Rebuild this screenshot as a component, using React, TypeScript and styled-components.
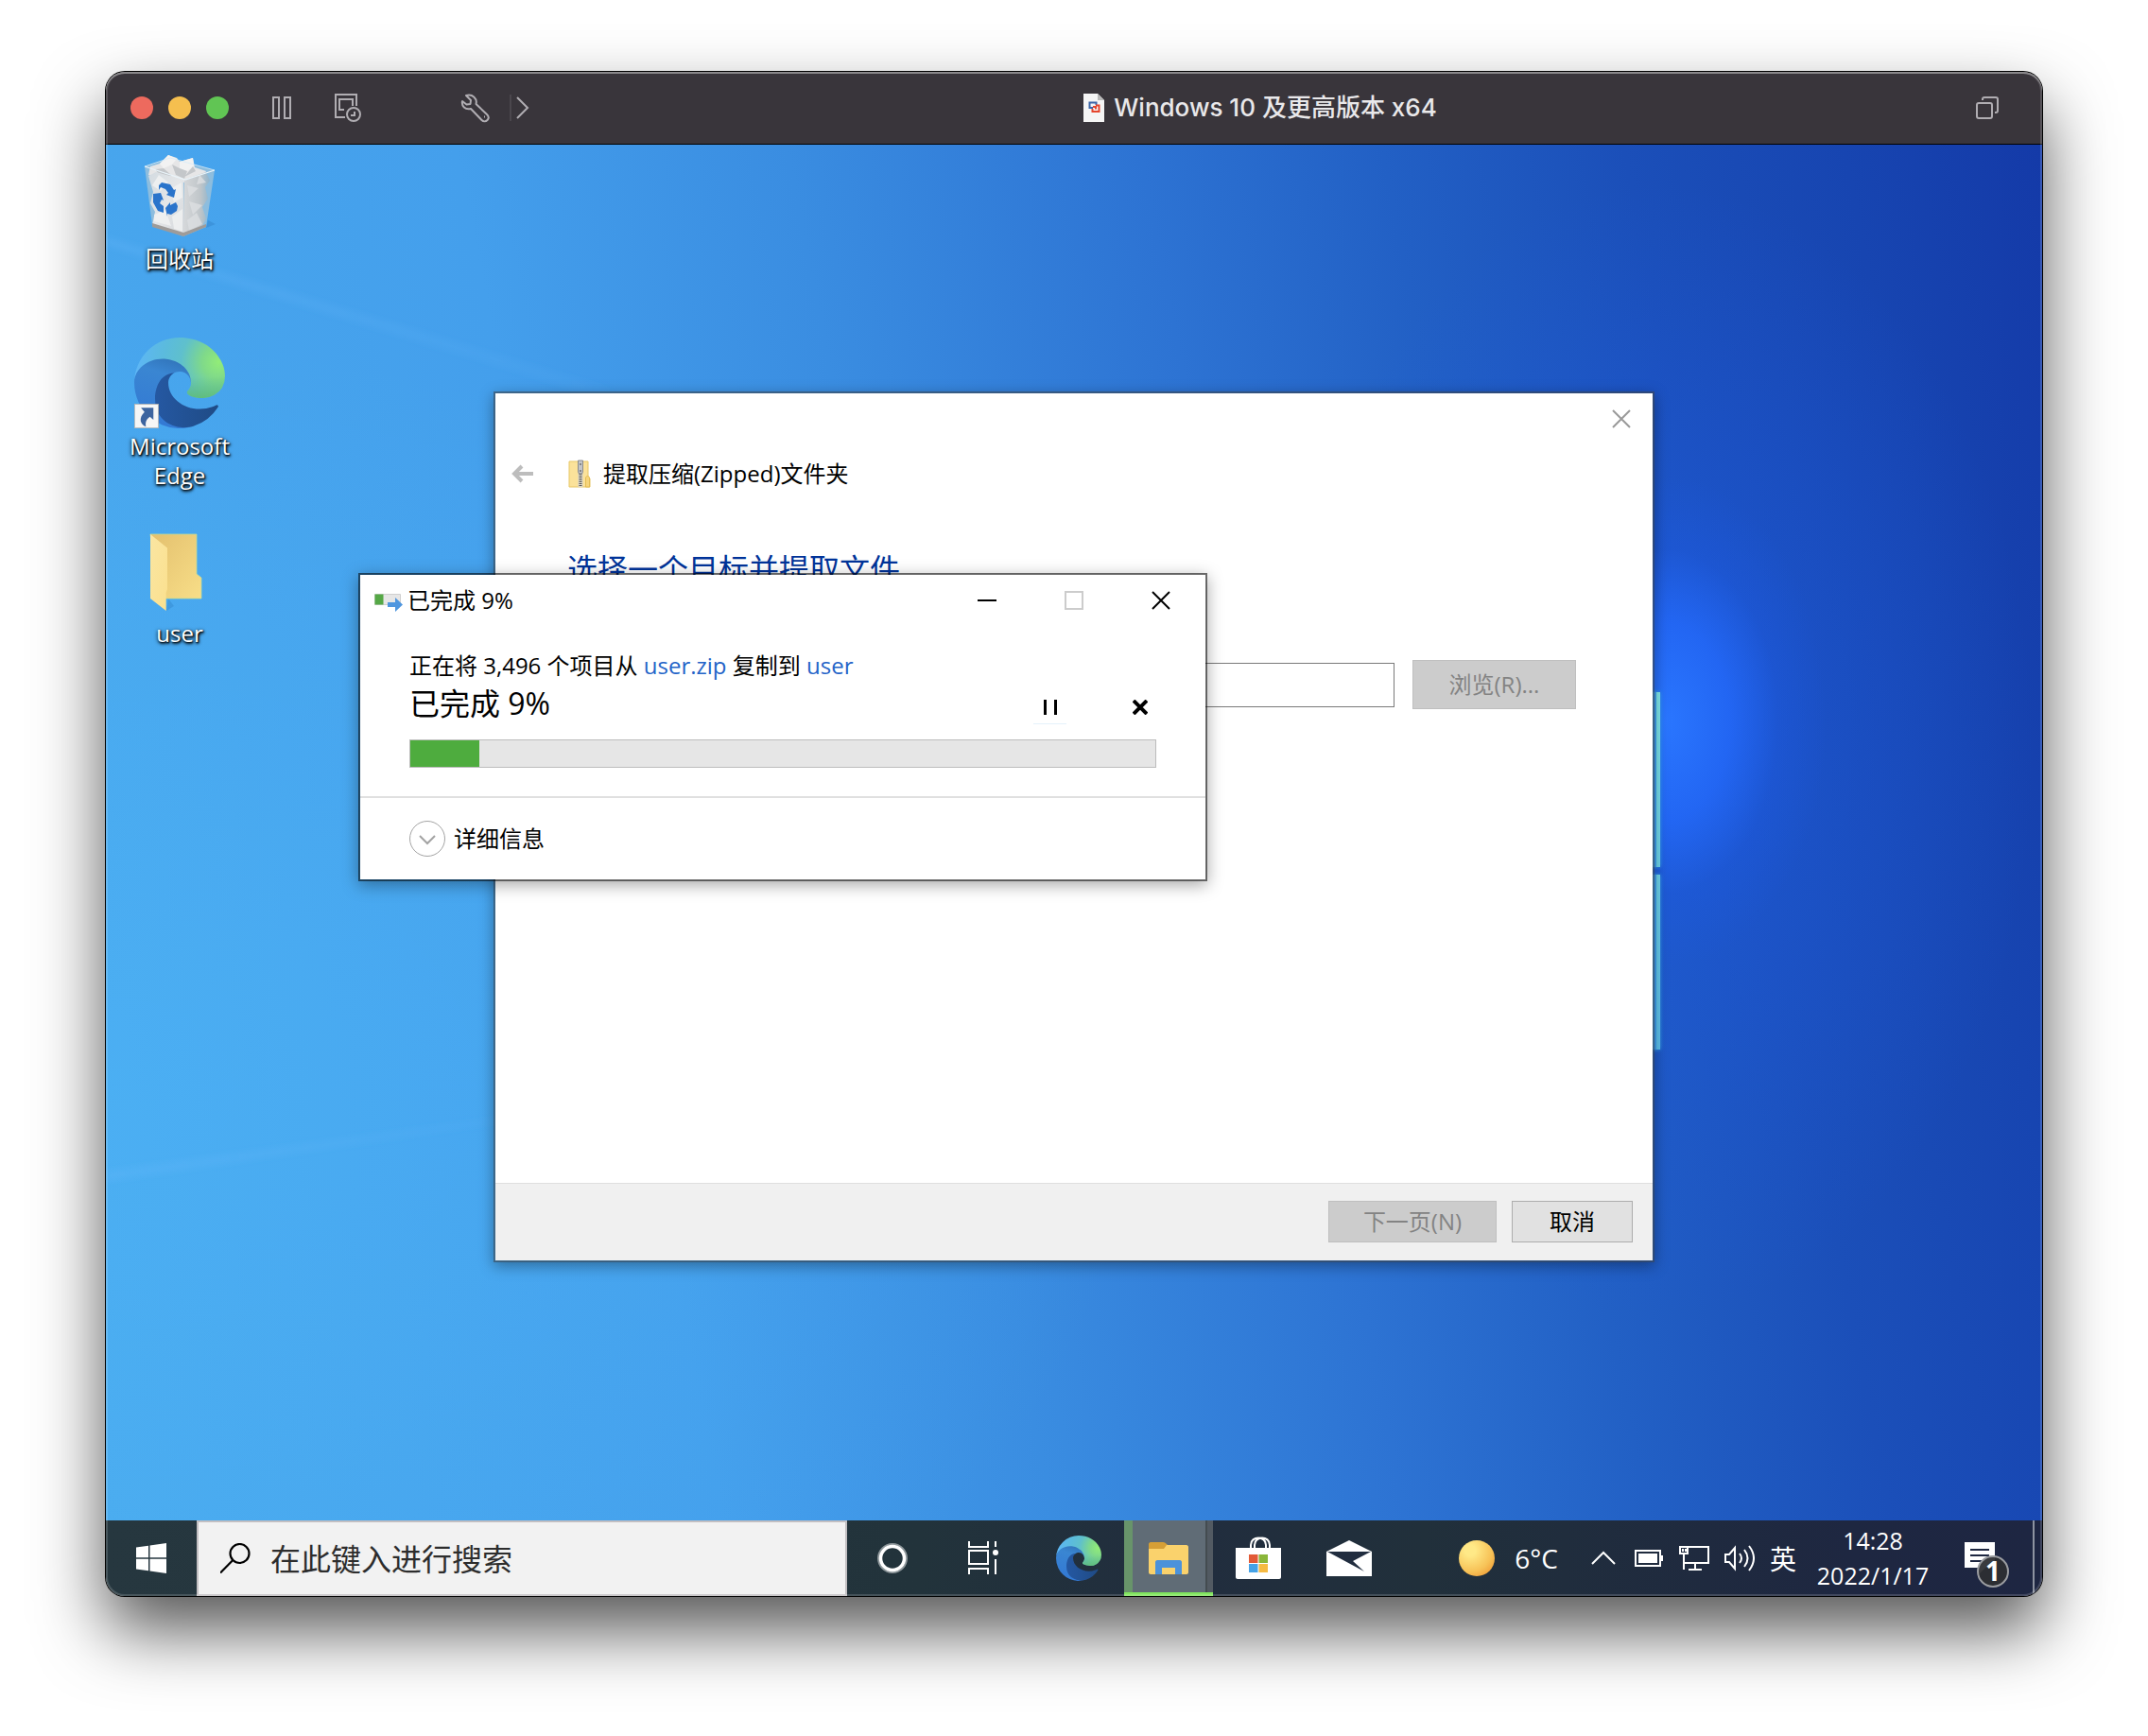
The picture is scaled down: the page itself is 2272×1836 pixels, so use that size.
import React from "react";
import styled, { createGlobalStyle } from "styled-components";

const uiFont = `"Open Sans", "Noto Sans CJK SC", sans-serif`;

const GlobalStyle = createGlobalStyle`
  *, *::before, *::after { box-sizing: border-box; }
  html, body { margin: 0; background: #fff; }
  body { font-family: ${uiFont}; color: #000; }
  button, input { font: inherit; color: inherit; }
  button { margin: 0; padding: 0; border: 0; background: none; }
  svg { display: block; flex: none; }
`;

const Page = styled.div`
  min-height: 100vh;
  display: flex;
  padding: 76px 112px 148px;
  overflow: hidden;
`;

const VmWindow = styled.main`
  position: relative;
  flex: 1;
  min-width: 0;
  display: flex;
  flex-direction: column;
  border-radius: 20px;
  overflow: hidden;
  box-shadow: 0 0 0 1px #000, 0 36px 72px rgba(0, 0, 0, 0.67);
  &::after {
    content: "";
    position: absolute;
    inset: 0;
    border-radius: 20px;
    pointer-events: none;
    box-shadow: inset 0 2px rgba(255, 255, 255, 0.3), inset 0 0 0 2px rgba(255, 255, 255, 0.16);
  }
`;

/* ---------- host title bar ---------- */

const HostBar = styled.header`
  display: flex;
  align-items: center;
  height: 77px;
  flex: none;
  padding: 0 46px 0 26px;
  background: #39353b;
  border-bottom: 1px solid #000;
  color: #b0adb2;
`;

const Lights = styled.div`
  display: flex;
  gap: 16px;
`;

const Light = styled.button<{ $color: string }>`
  width: 24px;
  height: 24px;
  border-radius: 50%;
  background: ${(p) => p.$color};
`;

const HostTools = styled.div<{ $start: number; $gap: number }>`
  display: flex;
  align-items: center;
  gap: ${(p) => p.$gap}px;
  margin-left: ${(p) => p.$start}px;
`;

const HostDivider = styled.span`
  width: 2px;
  height: 28px;
  margin: 0 -14px 0 2px;
  background: #4b474d;
`;

const HostTitle = styled.h1`
  flex: 1;
  display: flex;
  align-items: center;
  justify-content: center;
  gap: 9px;
  margin: 0;
  padding-left: 14px;
  font: 500 26px/32px Inter, "Noto Sans CJK SC", sans-serif;
  color: #e9e8ea;
  white-space: nowrap;
`;

/* ---------- guest desktop ---------- */

const Desktop = styled.section`
  position: relative;
  flex: 1;
  min-height: 1200px;
  overflow: hidden;
  background:
    radial-gradient(ellipse 170px 260px at 1650px 610px, rgba(42, 118, 255, 1), rgba(36, 106, 252, 0.8) 40%, rgba(30, 92, 230, 0.3) 70%, rgba(30, 90, 225, 0) 100%),
    radial-gradient(ellipse 400px 600px at 1640px 640px, rgba(30, 90, 225, 0.6), rgba(30, 90, 225, 0) 100%),
    radial-gradient(ellipse 1100px 800px at 0 1000px, rgba(80, 190, 255, 0.3), rgba(80, 190, 255, 0) 100%),
    linear-gradient(79deg, #4aaaee 0%, #449fec 28%, #3a8de1 43%, #2d73d3 59%, #2260c5 70%, #1b4fb9 81%, #1745b1 91%, #143aa8 100%);
`;

const Wallpaper = styled.svg`
  position: absolute;
  inset: 0;
  width: 100%;
  height: 100%;
`;

const Shortcuts = styled.nav`
  position: relative;
  width: 156px;
  padding-top: 6px;
`;

const Shortcut = styled.button`
  display: flex;
  flex-direction: column;
  align-items: center;
  gap: 3px;
  width: 156px;
  height: 198px;
`;

const ShortcutArt = styled.span`
  display: grid;
  place-items: center;
  height: 96px;
`;

const ShortcutLabel = styled.span`
  width: 120px;
  font-size: 24px;
  line-height: 31px;
  text-align: center;
  color: #fff;
  text-shadow: 1px 1px 2px #000, 0 1px 4px rgba(0, 0, 0, 0.8), 1px 2px 3px rgba(0, 0, 0, 0.6);
`;

/* ---------- extract wizard ---------- */

const Wizard = styled.section`
  position: absolute;
  left: 410px;
  top: 261px;
  width: 1228px;
  height: 921px;
  display: flex;
  flex-direction: column;
  border: 2px solid rgba(60, 70, 80, 0.6);
  background: #fff;
  background-clip: padding-box;
  box-shadow: 0 4px 14px rgba(0, 0, 0, 0.35);
  font-size: 24px;
  line-height: 32px;
`;

const WizardTop = styled.div`
  display: flex;
  justify-content: flex-end;
`;

const WizardClose = styled.button`
  display: grid;
  place-items: center;
  width: 66px;
  height: 54px;
  color: #999;
`;

const WizardHeader = styled.header`
  display: flex;
  align-items: center;
  height: 62px;
  padding-left: 17px;
`;

const WizardName = styled.h2`
  display: flex;
  align-items: center;
  gap: 13px;
  margin: 0 0 0 36px;
  font-size: 24px;
  font-weight: 400;
`;

const WizardBody = styled.div`
  flex: 1;
  padding: 50px 81px 0 76px;
`;

const WizardHeading = styled.h3`
  margin: 0 0 76px;
  font-size: 32px;
  line-height: 40px;
  font-weight: 400;
  color: #003399;
`;

const PathRow = styled.div`
  display: flex;
  align-items: center;
  gap: 19px;
`;

const PathInput = styled.input`
  flex: 1;
  min-width: 0;
  height: 47px;
  padding: 0 8px;
  border: 1px solid #7a7a7a;
  border-radius: 0;
  background: #fff;
`;

const PushButton = styled.button<{ $w: number; $h: number }>`
  width: ${(p) => p.$w}px;
  height: ${(p) => p.$h}px;
  border: 1px solid #adadad;
  background: #e1e1e1;
  color: #000;
  &:disabled {
    border-color: #bfbfbf;
    background: #ccc;
    color: #838383;
  }
`;

const WizardFooter = styled.footer`
  display: flex;
  justify-content: flex-end;
  align-items: center;
  gap: 16px;
  height: 82px;
  padding: 0 21px 2px 0;
  border-top: 1px solid #dfdfdf;
  background: #f0f0f0;
`;

/* ---------- copy progress ---------- */

const CopyDialog = styled.section`
  position: absolute;
  left: 267px;
  top: 453px;
  width: 898px;
  border: 2px solid rgba(0, 0, 0, 0.56);
  background: #fff;
  background-clip: padding-box;
  box-shadow: 0 4px 16px rgba(0, 0, 0, 0.35);
  font-size: 24px;
  line-height: 36px;
`;

const CopyTop = styled.header`
  display: flex;
  align-items: center;
  height: 54px;
  padding: 0 1px 0 14px;
`;

const CopyTitle = styled.h2`
  flex: 1;
  display: flex;
  align-items: center;
  gap: 4px;
  margin: 0;
  font-size: 24px;
  font-weight: 400;
`;

const CaptionButton = styled.button`
  display: grid;
  place-items: center;
  width: 92px;
  height: 54px;
`;

const CopyBody = styled.div`
  padding: 24px 52px 30px;
`;

const CopyLine = styled.p`
  margin: 0;
`;

const CopyLink = styled.a`
  color: #2464c8;
  text-decoration: none;
`;

const CopyStatus = styled.div`
  display: flex;
  align-items: flex-end;
  gap: 60px;
`;

const CopyPercent = styled.label`
  flex: 1;
  font-size: 32px;
  line-height: 44px;
`;

const CopyAction = styled.button<{ $hot?: boolean }>`
  display: grid;
  place-items: center;
  width: 35px;
  height: 36px;
  border-bottom: 1px solid ${(p) => (p.$hot ? "#e5f1fb" : "transparent")};
`;

const Bar = styled.progress`
  appearance: none;
  display: block;
  width: 100%;
  height: 30px;
  margin-top: 16px;
  border: 1px solid #bcbcbc;
  background: #e6e6e6;
  &::-webkit-progress-bar { background: #e6e6e6; }
  &::-webkit-progress-value { background: #4eac3e; }
`;

const CopyFooter = styled.footer`
  display: flex;
  align-items: center;
  height: 88px;
  padding-left: 52px;
  border-top: 2px solid #e0e0e0;
`;

const DetailsButton = styled.button`
  display: flex;
  align-items: center;
  gap: 9px;
`;

/* ---------- taskbar ---------- */

const Taskbar = styled.footer`
  display: flex;
  flex: none;
  height: 80px;
  background: linear-gradient(90deg, #26373f, #22333b 42%, #212d3e 56%, #21303b 68%, #1e2741 90%, #1e2642);
  color: #fff;
`;

const TaskButton = styled.button<{ $lead?: number }>`
  display: grid;
  place-items: center;
  width: 96px;
  margin-left: ${(p) => p.$lead || 0}px;
`;

const ActiveTask = styled(TaskButton)`
  width: 94px;
  border-bottom: 4px solid #80e55d;
  padding-top: 4px;
  background: linear-gradient(90deg, #68946a 9px, #606c76 9px 86px, #444c50 86px 88px, #525a62 88px);
`;

const SearchBox = styled.label`
  display: flex;
  align-items: center;
  gap: 21px;
  width: 688px;
  padding: 0 24px 0 23px;
  border: 2px solid #c2bfc2;
  background: #f2f2f2;
  color: #000;
`;

const SearchInput = styled.input`
  flex: 1;
  min-width: 0;
  border: 0;
  padding: 2px 0 0;
  outline: 0;
  background: none;
  font-size: 32px;
  line-height: 44px;
  &::placeholder { color: #2d2d2d; opacity: 1; }
`;

const Tray = styled.div`
  display: flex;
  margin-left: auto;
  padding-right: 8px;
`;

const Weather = styled.button`
  display: flex;
  align-items: center;
  gap: 21px;
  padding-right: 24px;
  font-size: 28px;
`;

const Sun = styled.span`
  width: 38px;
  height: 38px;
  border-radius: 50%;
  background: radial-gradient(circle at 32% 28%, #ffe987 15%, #f7c257 60%, #ee9430 92%);
`;

const TrayButton = styled.button`
  display: grid;
  place-items: center;
  width: 48px;
  font-size: 28px;
`;

const LanguageButton = styled(TrayButton)`
  width: 44px;
`;

const Clock = styled.button`
  width: 142px;
  padding-left: 4px;
  font-size: 25px;
  line-height: 37px;
  text-align: center;
`;

const Notices = styled.button`
  position: relative;
  width: 102px;
  padding-left: 28px;
  border-right: 2px solid #8d93a0;
`;

const NoticeBadge = styled.span`
  position: absolute;
  left: 41px;
  top: 37px;
  width: 34px;
  height: 34px;
  border: 2px solid #9a9ca0;
  border-radius: 50%;
  background: rgba(46, 47, 50, 0.94);
  font-size: 28px;
  line-height: 28px;
  font-weight: 700;
  text-align: center;
`;

/* ---------- drawings ---------- */

const EdgeLogo = ({ size, id, link }: { size: number; id: string; link?: boolean }) => (
  <svg width={size} height={size} viewBox="0 0 256 256" aria-hidden="true">
    <defs>
      <linearGradient id={`${id}a`} x1="60" y1="180" x2="235" y2="180" gradientUnits="userSpaceOnUse">
        <stop offset="0" stopColor="#2558a2" />
        <stop offset="1" stopColor="#1f4b86" />
      </linearGradient>
      <linearGradient id={`${id}b`} x1="120" y1="50" x2="60" y2="240" gradientUnits="userSpaceOnUse">
        <stop offset="0" stopColor="#2f70b4" />
        <stop offset=".3" stopColor="#3a86d2" />
        <stop offset="1" stopColor="#3379d4" />
      </linearGradient>
      <radialGradient id={`${id}c`} cx="238" cy="70" r="235" gradientUnits="userSpaceOnUse">
        <stop offset="0" stopColor="#92ec78" />
        <stop offset=".2" stopColor="#7fd98a" />
        <stop offset=".45" stopColor="#5fc0cc" />
        <stop offset=".65" stopColor="#5bbbdc" />
        <stop offset="1" stopColor="#5db6f6" />
      </radialGradient>
      <linearGradient id={`${id}d`} x1="0" y1="110" x2="0" y2="175" gradientUnits="userSpaceOnUse">
        <stop offset="0" stopColor="#62bd58" stopOpacity="0" />
        <stop offset="1" stopColor="#62bd58" stopOpacity=".75" />
      </linearGradient>
    </defs>
    <path fill={`url(#${id}b)`} d="M105.7 241.4a79.2 79.2 0 0 1-22.7-21.3 80.7 80.7 0 0 1 29.5-120c3.2-1.5 8.5-4.1 15.6-4a32.4 32.4 0 0 1 25.7 13 31.9 31.9 0 0 1 6.3 18.7c0-.2 24.5-79.6-80-79.6-43.9 0-80 41.7-80 78.2a130.2 130.2 0 0 0 12.1 56 128 128 0 0 0 156.4 67.1 75.5 75.5 0 0 1-62.8-8z" />
    <path fill={`url(#${id}a)`} d="M231 190.5c-3.4 1.8-6.9 3.4-10.5 4.7a101.9 101.9 0 0 1-35.9 6.4c-47.3 0-88.5-32.5-88.5-74.3 0-11.4 6.4-21.9 16.4-27.3-42.8 1.8-53.8 46.4-53.8 72.5 0 73.9 68.1 81.4 82.8 81.4 7.9 0 19.8-2.3 27-4.6l1.3-.4a128.3 128.3 0 0 0 66.6-52.8 4 4 0 0 0-5.4-5.6z" />
    {[`url(#${id}c)`, `url(#${id}d)`].map((fill) => (
      <path key={fill} fill={fill} d="M152.3 148.9c-.9 1-3.4 2.5-3.4 5.6 0 2.6 1.7 5.2 4.8 7.3 14.3 10 41.4 8.6 41.5 8.6a59.6 59.6 0 0 0 30.3-8.3 61.4 61.4 0 0 0 30.4-52.9c.3-22.4-8-37.3-11.3-43.9C223.5 24.1 178.4 0 128 0A128 128 0 0 0 0 126.2c.5-36.5 36.8-66 80-66 3.5 0 23.5.3 42 10a72.6 72.6 0 0 1 30.9 29.3c6.1 10.6 7.2 24.1 7.2 29.5s-2.7 13.3-7.8 19.9z" />
    ))}
    {link && (
      <g>
        <rect x="1" y="188" width="67" height="67" fill="#f6f6f6" stroke="#b9b4ae" strokeWidth="2" />
        <path d="M19 198h35v34l-10-9c-11 8-13 16-11 28-16-5-22-24-4-41z" fill="#3d649f" />
      </g>
    )}
  </svg>
);

const RecycleBin = () => (
  <svg width="76" height="88" viewBox="0 0 76 88" aria-hidden="true">
    <defs>
      <linearGradient id="binL" x1="0" y1="0" x2="1" y2="1">
        <stop offset="0" stopColor="#d3dbe1" />
        <stop offset=".5" stopColor="#e4e6e8" />
        <stop offset="1" stopColor="#d4d7db" />
      </linearGradient>
      <linearGradient id="binR" x1="0" y1="0" x2="1" y2="0">
        <stop offset="0" stopColor="#d6d8da" />
        <stop offset=".65" stopColor="#bfc5c9" />
        <stop offset="1" stopColor="#8fb4cc" />
      </linearGradient>
    </defs>
    <path d="M66 78l10-4-8-4z" fill="#2f7dc4" opacity=".4" />
    <path d="M1 13L28 4l47 13-9 60-24 10L9 75z" fill="#9fc3da" opacity=".8" />
    <path d="M5 22l2-9 10-3L26 1l9 3 3 4 14-4 2 10 12 4-4 8-20 4-20-4z" fill="#e6e6e7" />
    <path d="M17 10l9-9 9 4-5 6-9 4zM38 8l14-4 1 9-7 5-8-3z" fill="#f2f2f2" />
    <path d="M30 11l8 4 8 3-3 8-9-4zM12 16l9-1 9 8-12 1zM52 13l3 5-12 6z" fill="#c4c7ca" />
    <path d="M5 23l8-4 29 8 1 59L9 75l3-14-5-9 3-12z" fill="url(#binL)" />
    <path d="M43 27l23-8 4 9-5 7 3 12-6 9 4 12-5 10-19 8z" fill="url(#binR)" />
    <path d="M16 22l10 8-8 9-9-6zM28 37l12-7 1 16-9 5zM11 64l12-5 6 17-18-5zM30 66l11-8v24l-9-3z" fill="#f1f2f3" opacity=".8" />
    <path d="M46 33l12 3-10 9zM59 22l7 8-10 2zM48 50l14 4-10 10zM46 70l10-8 6 12-14 7z" fill="#dcdfe1" opacity=".8" />
    <path d="M1 13L44 27l31-10" fill="none" stroke="#e9f4fa" strokeWidth="1.2" />
    <path d="M1 13L28 4l47 13" fill="none" stroke="#d5ebf7" strokeWidth=".8" />
    <path d="M9 73l33 10 24-9v3L42 87 9 77z" fill="#9e9b99" />
    <path d="M16 33l3-3 9 2 4 6 2-1-2 9-8-3 2-2-3-4-5-2-2 3zM10 42l8-1 3 8-2-1-2 4 4 3v7l-6-2-5-9v-4zM23 57l5-6v3l6-3 2 4-1 5-6 4-4-1v3z" fill="#2a74cb" />
  </svg>
);

const FolderArt = () => (
  <svg width="64" height="90" viewBox="0 -6 64 90" aria-hidden="true">
    <defs>
      <linearGradient id="foldB" x1="0" y1="0" x2="1" y2="1">
        <stop offset="0" stopColor="#e3c06e" />
        <stop offset="1" stopColor="#f8de88" />
      </linearGradient>
      <linearGradient id="foldF" x1="0" y1="0" x2="1" y2="1">
        <stop offset="0" stopColor="#fae6a2" />
        <stop offset="1" stopColor="#fbe08e" />
      </linearGradient>
    </defs>
    <path d="M18 82l8-5-6-8z" fill="#2f7dc4" opacity=".35" />
    <path d="M1 1h49v42l5 4v22H12z" fill="url(#foldB)" stroke="#b9dba0" strokeWidth=".8" />
    <path d="M1 1l18 14.6V59l-1.300 4v19L1 69z" fill="url(#foldF)" />
  </svg>
);

const ZipIcon = () => (
  <svg width="24" height="30" viewBox="0 0 24 30" aria-hidden="true">
    <path d="M1 2h20v16l2 2v9H1z" fill="#fbe29a" stroke="#e8c766" />
    <path d="M18.500 29V19l2-2 2 2v10z" fill="#f7d57c" stroke="#e3bd55" />
    <path d="M10.500 3h5v26h-5z" fill="#d8d4c8" />
    <path d="M13 15v14" stroke="#5f5c55" strokeWidth="3" strokeDasharray="1 1" />
    <path d="M10.500 1h5v12l-1 2h-3l-1-2z" fill="#c3c5c9" stroke="#77797d" strokeWidth=".8" />
    <path d="M12 5h2M12 12h2" stroke="#444" />
  </svg>
);

const Cross = ({ size, w }: { size: number; w: number }) => (
  <svg width={size} height={size} viewBox={`0 0 ${size} ${size}`} fill="none" stroke="currentColor" strokeWidth={w} aria-hidden="true">
    <path d={`M1 1L${size - 1} ${size - 1}M${size - 1} 1L1 ${size - 1}`} />
  </svg>
);

export default function App() {
  const total = 3496;
  const done = 324;
  return (
    <>
      <GlobalStyle />
      <Page>
        <VmWindow>
          <HostBar>
            <Lights>
              <Light $color="#ed6a5e" aria-label="关闭" />
              <Light $color="#f5bf4f" aria-label="最小化" />
              <Light $color="#61c554" aria-label="全屏" />
            </Lights>
            <HostTools $start={44} $gap={42}>
              <button aria-label="暂停">
                <svg width="24" height="24" viewBox="0 0 24 24" fill="none" stroke="currentColor" strokeWidth="2">
                  <path d="M3 1h6v22H3zM15 1h6v22h-6z" />
                </svg>
              </button>
              <button aria-label="快照">
                <svg width="32" height="32" viewBox="0 0 32 32" fill="none" stroke="currentColor" strokeWidth="2">
                  <path d="M13 26H3V2h22v12M21 14V7H7v11h5" />
                  <circle cx="22" cy="23" r="7" />
                  <path d="M23 20v4h-4" />
                </svg>
              </button>
            </HostTools>
            <HostTools $start={103} $gap={18}>
              <button aria-label="设置">
                <svg width="32" height="32" viewBox="0 0 32 32" fill="none" stroke="currentColor" strokeWidth="2" strokeLinejoin="round">
                  <path d="M6 3l5 5-.5 4-4 .5L2 9c-1 5 3 9.500 9 8l11.500 12c2 2 4.500 1.500 6 0s1.500-4-.5-6L16.500 12C18 6.500 13 1 6 3z" />
                  <path d="M25 25.500h1" />
                </svg>
              </button>
              <HostDivider />
              <button aria-label="更多">
                <svg width="16" height="28" viewBox="0 0 16 28" fill="none" stroke="currentColor" strokeWidth="2">
                  <path d="M2 3l11 11L2 25" />
                </svg>
              </button>
            </HostTools>
            <HostTitle>
              <svg width="24" height="30" viewBox="0 0 24 30" aria-hidden="true">
                <path d="M1 0h15l7 7v23H1z" fill="#f5f5f5" />
                <path d="M16 0l7 7h-7z" fill="#b9b9b9" />
                <path d="M11 15H7.500V9.500h7V12" fill="none" stroke="#3b65a8" strokeWidth="2" />
                <path d="M14 12.500h3.500v6.500h-7v-3M11 14h3v2.500" fill="none" stroke="#e5452c" strokeWidth="2" />
              </svg>
              Windows 10 及更高版本 x64
            </HostTitle>
            <button aria-label="窗口">
              <svg width="24" height="24" viewBox="0 0 24 24" fill="none" stroke="currentColor" strokeWidth="2">
                <rect x="1" y="7" width="16" height="16" rx="2" />
                <path d="M7 4V3c0-1 1-2 2-2h12c1 0 2 1 2 2v12c0 1-1 2-2 2h-1" />
              </svg>
            </button>
          </HostBar>

          <Desktop>
            <Wallpaper viewBox="0 0 2048 1455" preserveAspectRatio="xMinYMin slice" aria-hidden="true">
              <defs>
                <linearGradient id="ray" x1="0" y1="0" x2="1" y2="0">
                  <stop offset="0" stopColor="#6fbcff" stopOpacity=".22" />
                  <stop offset="1" stopColor="#6fbcff" stopOpacity=".05" />
                </linearGradient>
                <filter id="soft" x="-10%" y="-20%" width="120%" height="140%">
                  <feGaussianBlur stdDeviation="3" />
                </filter>
                <filter id="glow" x="-200%" y="-10%" width="500%" height="120%">
                  <feGaussianBlur stdDeviation="2" />
                </filter>
                <linearGradient id="pane" x1="0" y1="579" x2="0" y2="957" gradientUnits="userSpaceOnUse">
                  <stop offset="0" stopColor="#80e8ea" />
                  <stop offset="1" stopColor="#5cc0ec" />
                </linearGradient>
              </defs>
              <path d="M0 98L540 260H500L0 106z" fill="url(#ray)" filter="url(#soft)" />
              <path d="M0 1086l420-58v6L0 1096z" fill="url(#ray)" filter="url(#soft)" />
              <path d="M1634 579h10v185h-10zM1634 772h10v185h-10z" fill="#35a8f0" filter="url(#glow)" />
              <path d="M1200 579h443v185h-443zM1200 772h443v185h-443z" fill="#3f9ff0" />
              <path d="M1640 579h4v185h-4zM1640 772h4v185h-4z" fill="url(#pane)" />
            </Wallpaper>

            <Shortcuts aria-label="桌面">
              <Shortcut>
                <ShortcutArt><RecycleBin /></ShortcutArt>
                <ShortcutLabel>回收站</ShortcutLabel>
              </Shortcut>
              <Shortcut>
                <ShortcutArt><EdgeLogo size={96} id="edgeDesk" link /></ShortcutArt>
                <ShortcutLabel>Microsoft Edge</ShortcutLabel>
              </Shortcut>
              <Shortcut>
                <ShortcutArt><FolderArt /></ShortcutArt>
                <ShortcutLabel>user</ShortcutLabel>
              </Shortcut>
            </Shortcuts>

            <Wizard aria-label="提取压缩文件夹">
              <WizardTop>
                <WizardClose aria-label="关闭"><Cross size={20} w={2} /></WizardClose>
              </WizardTop>
              <WizardHeader>
                <button aria-label="返回" disabled>
                  <svg width="24" height="20" viewBox="0 0 24 20" fill="none" stroke="#bdbdbd" strokeWidth="4">
                    <path d="M23 10H4M11 2l-8 8 8 8" />
                  </svg>
                </button>
                <WizardName><ZipIcon />提取压缩(Zipped)文件夹</WizardName>
              </WizardHeader>
              <WizardBody>
                <WizardHeading>选择一个目标并提取文件</WizardHeading>
                <PathRow>
                  <PathInput type="text" aria-label="目标文件夹" />
                  <PushButton $w={173} $h={52} disabled>浏览(R)...</PushButton>
                </PathRow>
              </WizardBody>
              <WizardFooter>
                <PushButton $w={178} $h={44} disabled>下一页(N)</PushButton>
                <PushButton $w={128} $h={44}>取消</PushButton>
              </WizardFooter>
            </Wizard>

            <CopyDialog aria-label="复制进度">
              <CopyTop>
                <CopyTitle>
                  <svg width="32" height="24" viewBox="0 0 32 24" aria-hidden="true">
                    <path d="M1.500 5.500h27v11h-27z" fill="#e6e6e6" stroke="#cfcfcf" />
                    <path d="M1.500 5.500h9v11h-9z" fill="#55a846" />
                    <path d="M15 14h8V9l8 7.500-8 7.500v-5h-8z" fill="#4f96df" />
                  </svg>
                  已完成 9%
                </CopyTitle>
                <CaptionButton aria-label="最小化">
                  <svg width="20" height="20" viewBox="0 0 20 20"><path d="M0 10h20" stroke="#000" strokeWidth="2" /></svg>
                </CaptionButton>
                <CaptionButton aria-label="最大化" disabled>
                  <svg width="20" height="20" viewBox="0 0 20 20"><path d="M1 1h18v18H1z" fill="none" stroke="#ccc" strokeWidth="2" /></svg>
                </CaptionButton>
                <CaptionButton aria-label="关闭"><Cross size={20} w={2} /></CaptionButton>
              </CopyTop>
              <CopyBody>
                <CopyLine>
                  正在将 3,496 个项目从 <CopyLink href="#zip">user.zip</CopyLink> 复制到 <CopyLink href="#user">user</CopyLink>
                </CopyLine>
                <CopyStatus>
                  <CopyPercent htmlFor="copy-bar">已完成 9%</CopyPercent>
                  <CopyAction $hot aria-label="暂停">
                    <svg width="16" height="16" viewBox="0 0 16 16"><path d="M2.500 0v16M13.500 0v16" stroke="#000" strokeWidth="3" /></svg>
                  </CopyAction>
                  <CopyAction aria-label="取消"><Cross size={16} w={4} /></CopyAction>
                </CopyStatus>
                <Bar id="copy-bar" value={done} max={total} />
              </CopyBody>
              <CopyFooter>
                <DetailsButton>
                  <svg width="38" height="38" viewBox="0 0 38 38" fill="none" stroke="#a3a3a3" aria-hidden="true">
                    <circle cx="19" cy="19" r="18.500" />
                    <path d="M11 16l8 8 8-8" strokeWidth="2" />
                  </svg>
                  详细信息
                </DetailsButton>
              </CopyFooter>
            </CopyDialog>
          </Desktop>

          <Taskbar>
            <TaskButton aria-label="开始">
              <svg width="32" height="32" viewBox="0 0 32 32" fill="#fff">
                <path d="M0 4.500L13 2.700v12.600H0zM14.500 2.500L32 0v15.300H14.500zM0 16.700h13v12.600L0 27.500zM14.500 16.700H32V32l-17.500-2.500z" />
              </svg>
            </TaskButton>
            <SearchBox>
              <svg width="32" height="32" viewBox="0 0 32 32" fill="none" stroke="#000" strokeWidth="2.200" aria-hidden="true">
                <circle cx="20.500" cy="11" r="10" />
                <path d="M13.300 18L0 31.500" />
              </svg>
              <SearchInput type="text" aria-label="搜索" placeholder="在此键入进行搜索" />
            </SearchBox>
            <TaskButton aria-label="Cortana">
              <svg width="32" height="32" viewBox="0 0 32 32" fill="none">
                <circle cx="16" cy="16" r="15" stroke="#8e979b" strokeWidth="2" />
                <circle cx="16" cy="16" r="12.500" stroke="#fff" strokeWidth="3.500" />
              </svg>
            </TaskButton>
            <TaskButton aria-label="任务视图">
              <svg width="32" height="36" viewBox="0 0 32 36" fill="none" stroke="#fff" strokeWidth="2">
                <path d="M1 0v6h20V0M1 10h20v14H1zM1 35v-6h20v6M29 0v6M29 19v16" />
                <circle cx="29" cy="12" r="3" fill="#fff" stroke="none" />
              </svg>
            </TaskButton>
            <TaskButton aria-label="Microsoft Edge" $lead={5}><EdgeLogo size={48} id="edgeTask" /></TaskButton>
            <ActiveTask aria-label="文件资源管理器">
              <svg width="42" height="34" viewBox="0 0 42 34">
                <path d="M0 2c0-1 1-2 2-2h13c2 0 3 1 5 3v6H0z" fill="#d69f36" />
                <path d="M0 7h16l3-4h21c1 0 2 1 2 2v27c0 1-1 2-2 2H2c-1 0-2-1-2-2z" fill="#fad26c" />
                <path d="M7 34V21c0-1 1-2 2-2h24c1 0 2 1 2 2v13h-7v-7H14v7z" fill="#4c92da" />
              </svg>
            </ActiveTask>
            <TaskButton aria-label="Microsoft Store">
              <svg width="48" height="46" viewBox="0 0 48 46">
                <path d="M16 13V9c0-10 16-10 16 0v4M20 13V9c0-10 16-10 16 0v4" fill="none" stroke="#fff" strokeWidth="2" />
                <path d="M0 12h48v31c0 1-1 2-2 2H2c-1 0-2-1-2-2z" fill="#fff" />
                <path d="M14 19h9.500v9H14z" fill="#e25a37" />
                <path d="M24.500 19H34v9h-9.500z" fill="#8ab63a" />
                <path d="M14 29h9.500v9H14z" fill="#45a2e6" />
                <path d="M24.500 29H34v9h-9.500z" fill="#f6ba42" />
              </svg>
            </TaskButton>
            <TaskButton aria-label="邮件">
              <svg width="48" height="38" viewBox="0 0 48 38">
                <path d="M0 12L24 0l24 12v26H0z" fill="#fff" />
                <path d="M1 12h46L28 22l12 11z" fill="#212d3f" />
              </svg>
            </TaskButton>

            <Tray>
              <Weather><Sun />6°C</Weather>
              <TrayButton aria-label="显示隐藏的图标">
                <svg width="26" height="16" viewBox="0 0 26 16" fill="none" stroke="#fff" strokeWidth="2"><path d="M1 14L13 2l12 12" /></svg>
              </TrayButton>
              <TrayButton aria-label="电池">
                <svg width="30" height="18" viewBox="0 0 30 18"><path d="M1 1h26v16H1z" fill="none" stroke="#fff" strokeWidth="2" /><path d="M4 4h20v10H4zM28 6h2v6h-2z" fill="#fff" /></svg>
              </TrayButton>
              <TrayButton aria-label="网络">
                <svg width="32" height="28" viewBox="0 0 32 28" fill="none" stroke="#fff" strokeWidth="2">
                  <path d="M9 2h22v17H6M1 2h8v7H1zM5 9v17M17 19v6M10 26h14M4 4v3M7 4v3" />
                </svg>
              </TrayButton>
              <TrayButton aria-label="音量">
                <svg width="32" height="28" viewBox="0 0 32 28" fill="none" stroke="#fff" strokeWidth="2">
                  <path d="M1 10h4l6-7v22l-6-7H1zM16 9q4 5 0 10M21 5q7 9 0 18M26 1q10 13 0 26" />
                </svg>
              </TrayButton>
              <LanguageButton>英</LanguageButton>
              <Clock>14:28<br />2022/1/17</Clock>
              <Notices aria-label="通知">
                <svg width="32" height="34" viewBox="0 0 32 34">
                  <path d="M0 0h32v27H22l-7 7v-7H0z" fill="#fff" />
                  <path d="M6 8h20M6 14h20M6 20h14" stroke="#1e2741" strokeWidth="2" />
                </svg>
                <NoticeBadge>1</NoticeBadge>
              </Notices>
            </Tray>
          </Taskbar>
        </VmWindow>
      </Page>
    </>
  );
}
